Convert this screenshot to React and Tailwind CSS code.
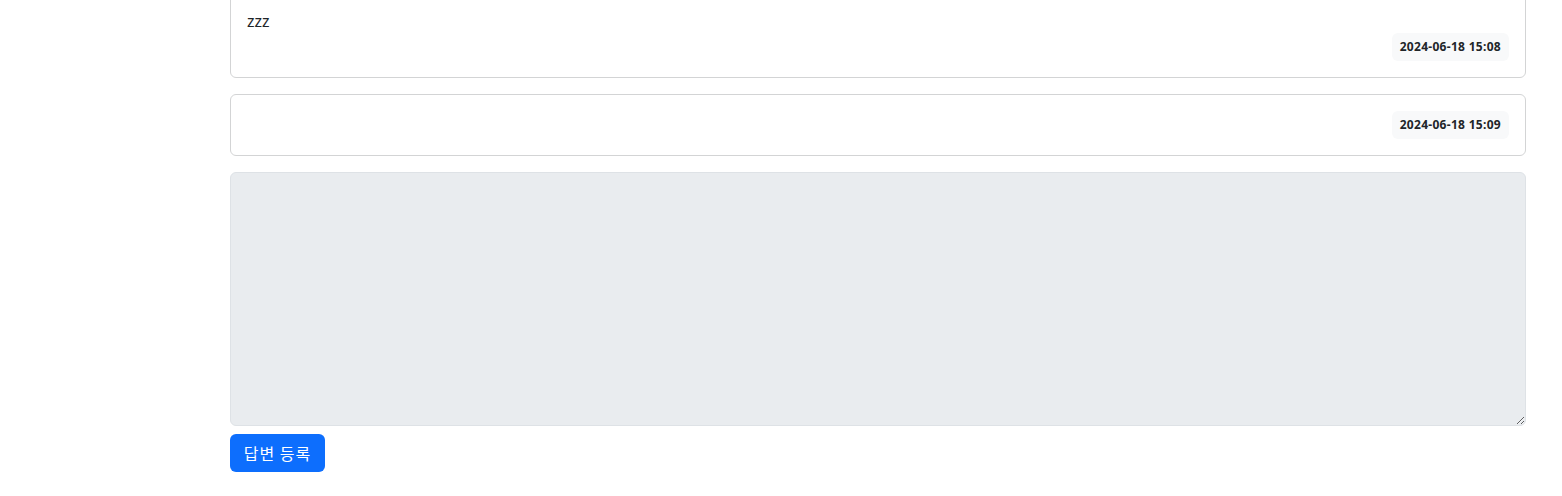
import React from 'react';

function Answer({ content, date }) {
  return (
    <div className="border border-[#d3d4d5] rounded-md bg-white mb-4">
      <div className="p-4">
        <div className="whitespace-pre-line text-base leading-6">{content}</div>
        <div className="flex justify-end">
          <div className="bg-[#f8f9fa] text-[#212529] text-xs font-bold leading-3 tracking-[0.3px] p-2 rounded-md">
            {date}
          </div>
        </div>
      </div>
    </div>
  );
}

export default function App() {
  const answers = [
    { content: 'zzz', date: '2024-06-18 15:08' },
    { content: '', date: '2024-06-18 15:09' },
  ];

  return (
    <div
      className="h-[496px] overflow-hidden bg-white text-[#212529]"
      style={{ fontFamily: '"Noto Sans", "Noto Sans CJK KR", sans-serif' }}
    >
      <div className="ml-[230px] w-[1296px] -mt-[8px]">
        {answers.map((a) => (
          <Answer key={a.date} content={a.content} date={a.date} />
        ))}
        <textarea
          disabled
          rows={10}
          className="block w-full h-[254px] bg-[#e9ecef] border border-[#dee2e6] rounded-md px-3 py-1.5 mb-2"
        />
        <button className="w-[95px] bg-[#0d6efd] text-white text-base leading-6 tracking-[1px] py-[7px] rounded-md font-['Noto_Sans_CJK_KR',sans-serif]">
          답변 등록
        </button>
      </div>
    </div>
  );
}
